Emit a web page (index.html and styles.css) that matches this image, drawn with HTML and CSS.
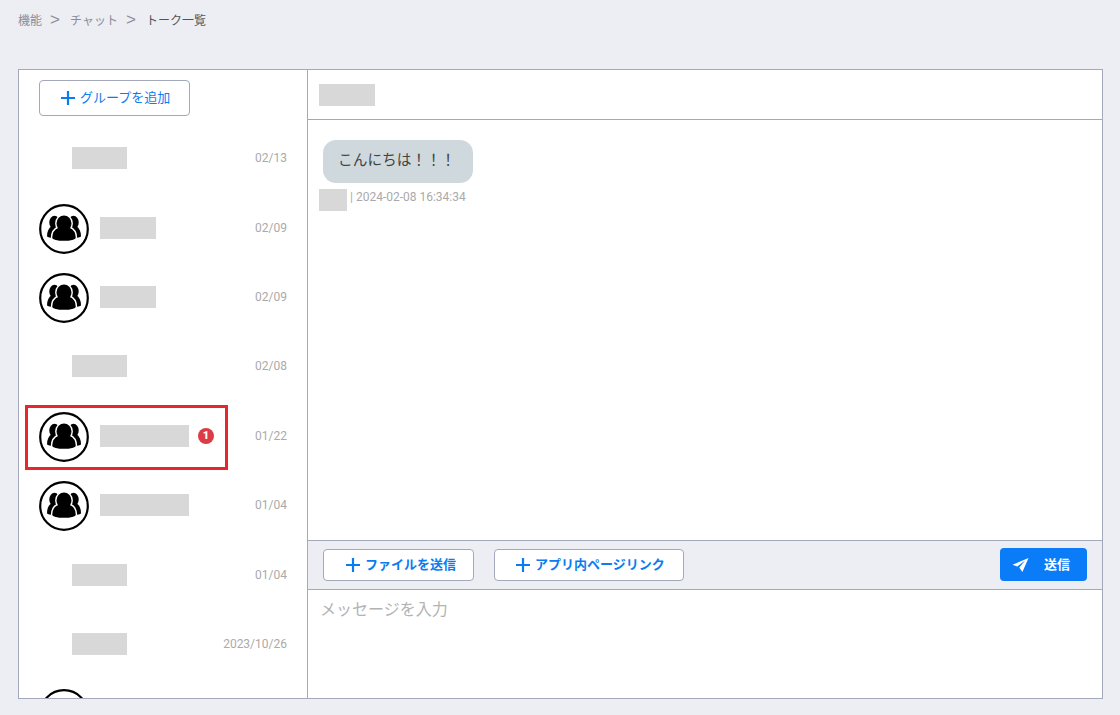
FILE: index.html
```html
<!DOCTYPE html>
<html lang="ja">
<head>
<meta charset="utf-8">
<title>トーク一覧</title>
<link rel="stylesheet" href="styles.css">
</head>
<body>
<svg class="defs" width="0" height="0" aria-hidden="true">
  <symbol id="group" viewBox="0 0 50 50">
    <circle cx="25" cy="25" r="23.8" fill="#fff" stroke="#000" stroke-width="2.2"/>
    <g fill="#000">
      <ellipse cx="15.500" cy="18.500" rx="5.200" ry="6.800"/>
      <ellipse cx="34.500" cy="18.500" rx="5.200" ry="6.800"/>
      <path d="M8 32.500c0-5 1.500-8.500 5-10.500l5 1-1 11c-4 0-7.500-.5-9-1.500z"/>
      <path d="M42 32.500c0-5-1.500-8.500-5-10.500l-5 1 1 11c4 0 7.500-.5 9-1.500z"/>
    </g>
    <g fill="#000" stroke="#fff" stroke-width="1.400">
      <ellipse cx="25" cy="19.500" rx="8.200" ry="8.800"/>
      <path d="M12.500 34c0-6 3-9.500 7-11 3.500 2.500 7.500 2.500 11 0 4 1.500 7 5 7 11 0 2.300-6.500 3.500-12.500 3.500s-12.500-1.200-12.500-3.500z"/>
    </g>
    <ellipse cx="25" cy="23" rx="6.500" ry="4.500" fill="#000"/>
  </symbol>
  <symbol id="plus" viewBox="0 0 16 16">
    <path d="M8 1v14M1 8h14" fill="none" stroke="#0a7cf0" stroke-width="2.200"/>
  </symbol>
</svg>

<nav class="crumbs">
  <span>機能</span><span class="sep">&gt;</span><span>チャット</span><span class="sep">&gt;</span><span class="current">トーク一覧</span>
</nav>

<main class="panel">
  <aside class="side">
    <div class="side-head">
      <button class="btn btn-add"><svg class="plus"><use href="#plus"/></svg>グループを追加</button>
    </div>
    <ul class="list">
      <li class="row"><span class="mask mask-s indent"></span><time class="date">02/13</time></li>
      <li class="row"><svg class="avatar"><use href="#group"/></svg><span class="mask mask-s"></span><time class="date">02/09</time></li>
      <li class="row"><svg class="avatar"><use href="#group"/></svg><span class="mask mask-s"></span><time class="date">02/09</time></li>
      <li class="row"><span class="mask mask-s indent"></span><time class="date">02/08</time></li>
      <li class="row row-marked"><svg class="avatar"><use href="#group"/></svg><span class="mask mask-l"></span><span class="badge">1</span><time class="date">01/22</time><span class="marker"></span></li>
      <li class="row"><svg class="avatar"><use href="#group"/></svg><span class="mask mask-l"></span><time class="date">01/04</time></li>
      <li class="row"><span class="mask mask-s indent"></span><time class="date">01/04</time></li>
      <li class="row"><span class="mask mask-s indent"></span><time class="date">2023/10/26</time></li>
      <li class="row"><svg class="avatar"><use href="#group"/></svg></li>
    </ul>
  </aside>

  <section class="chat">
    <header class="chat-head"><span class="mask mask-s"></span></header>
    <div class="messages">
      <div class="bubble">こんにちは！！！</div>
      <div class="meta"><span class="mask mask-xs"></span><span class="stamp">| 2024-02-08 16:34:34</span></div>
    </div>
    <div class="toolbar">
      <button class="btn btn-file"><svg class="plus"><use href="#plus"/></svg>ファイルを送信</button>
      <button class="btn btn-link"><svg class="plus"><use href="#plus"/></svg>アプリ内ページリンク</button>
      <button class="btn-send">
        <svg class="send-icon" viewBox="0 0 18 16"><path d="M0.500 7.800 17.500 0.500 11 15.500 7.700 10.700 14 3.200 5.600 9.700z" fill="#fff"/></svg>
        <span>送信</span>
      </button>
    </div>
    <div class="composer">メッセージを入力</div>
  </section>
</main>
</body>
</html>
```
FILE: styles.css
```css
* { box-sizing: border-box; }
html, body { margin: 0; height: 715px; overflow: hidden; }
body {
  background: #eceef4;
  font-family: Roboto, "Noto Sans CJK JP", sans-serif;
  color: #333;
}
.defs { display: block; height: 0; }

.crumbs {
  display: flex;
  align-items: center;
  height: 39px;
  padding-left: 18px;
  font-size: 12px;
  color: #8b8d96;
}
.crumbs .current { color: #555; }
.crumbs .sep {
  width: 10px;
  margin: 0 10px 0 8px;
  font-family: "Liberation Sans", sans-serif;
  font-size: 17px;
}

.panel {
  display: flex;
  width: 1085px;
  height: 630px;
  margin: 30px 0 0 18px;
  background: #fff;
  border: 1px solid #a4a8bb;
}

.side {
  flex: 0 0 289px;
  border-right: 1px solid #a4a8bb;
  overflow: hidden;
}
.side-head { height: 53.500px; padding: 10px 0 0 20px; }

.btn {
  display: flex;
  align-items: center;
  height: 36px;
  padding: 0 0 3px;
  background: #fff;
  border: 1px solid #a4a8bb;
  border-radius: 4px;
  color: #0a7cf0;
  font: 500 13px Roboto, "Noto Sans CJK JP", sans-serif;
}
.btn-add { width: 151px; padding-left: 20px; font-weight: 400; }
.plus { width: 16px; height: 16px; margin: 3px 4px 0 0; flex: none; }

.list { list-style: none; margin: 0; padding: 0; }
.row {
  position: relative;
  display: flex;
  align-items: center;
  height: 69.400px;
  padding: 0 20px 0 20px;
}
.avatar { width: 50px; height: 50px; margin: 2px 11px 0 0; flex: none; }
.mask { display: block; height: 22px; background: #d8d8d8; flex: none; }
.mask-s { width: 56px; }
.mask-l { width: 89px; }
.mask-xs { width: 28px; }
.indent { width: 55px; margin-left: 33px; }
.date { margin-left: auto; font-size: 12px; color: #aaa; }

.badge {
  display: flex;
  align-items: center;
  justify-content: center;
  width: 16px;
  height: 16px;
  margin-left: 9px;
  border-radius: 50%;
  background: #dc3c45;
  color: #fff;
  font-size: 11px;
  font-weight: 900;
}
.marker {
  position: absolute;
  left: 6px;
  top: 3.800px;
  width: 203px;
  height: 65px;
  border: 3px solid #e8262d;
}

.chat { flex: 1; display: flex; flex-direction: column; min-width: 0; }
.chat-head {
  display: flex;
  align-items: center;
  height: 50px;
  padding-left: 11px;
  border-bottom: 1px solid #a4a8bb;
}
.messages { flex: 1; padding: 20px 0 0 11px; }
.bubble {
  display: inline-block;
  margin-left: 4px;
  height: 43px;
  width: 150px;
  padding-left: 15px;
  line-height: 41px;
  border-radius: 13px;
  background: #cfd8dc;
  font-size: 14.700px;
  color: #444;
}
.meta { display: flex; align-items: center; margin-top: 6px; }
.stamp { font-size: 12px; color: #aaa; margin: -6px 0 0 3px; }

.toolbar {
  display: flex;
  align-items: center;
  height: 50px;
  padding: 0 15px;
  background: #eceef4;
  border-top: 1px solid #a4a8bb;
  border-bottom: 1px solid #a4a8bb;
}
.btn-file { width: 151px; height: 32px; padding-left: 21px; font-weight: 700; }
.btn-link { width: 190px; height: 32px; margin-left: 20px; padding-left: 20px; font-weight: 700; }
.btn-send {
  display: flex;
  align-items: center;
  width: 87px;
  height: 33px;
  margin: -1px 0 0 auto;
  padding: 0 0 2px 12px;
  border: 0;
  border-radius: 4px;
  background: #0a7cf7;
  color: #fff;
  font: 700 13px Roboto, "Noto Sans CJK JP", sans-serif;
}
.send-icon { width: 17px; height: 16px; margin: 2px 15px 0 0; }

.composer {
  height: 108px;
  padding: 6px 12px;
  font-size: 16px;
  color: #b3b3b3;
}
```
